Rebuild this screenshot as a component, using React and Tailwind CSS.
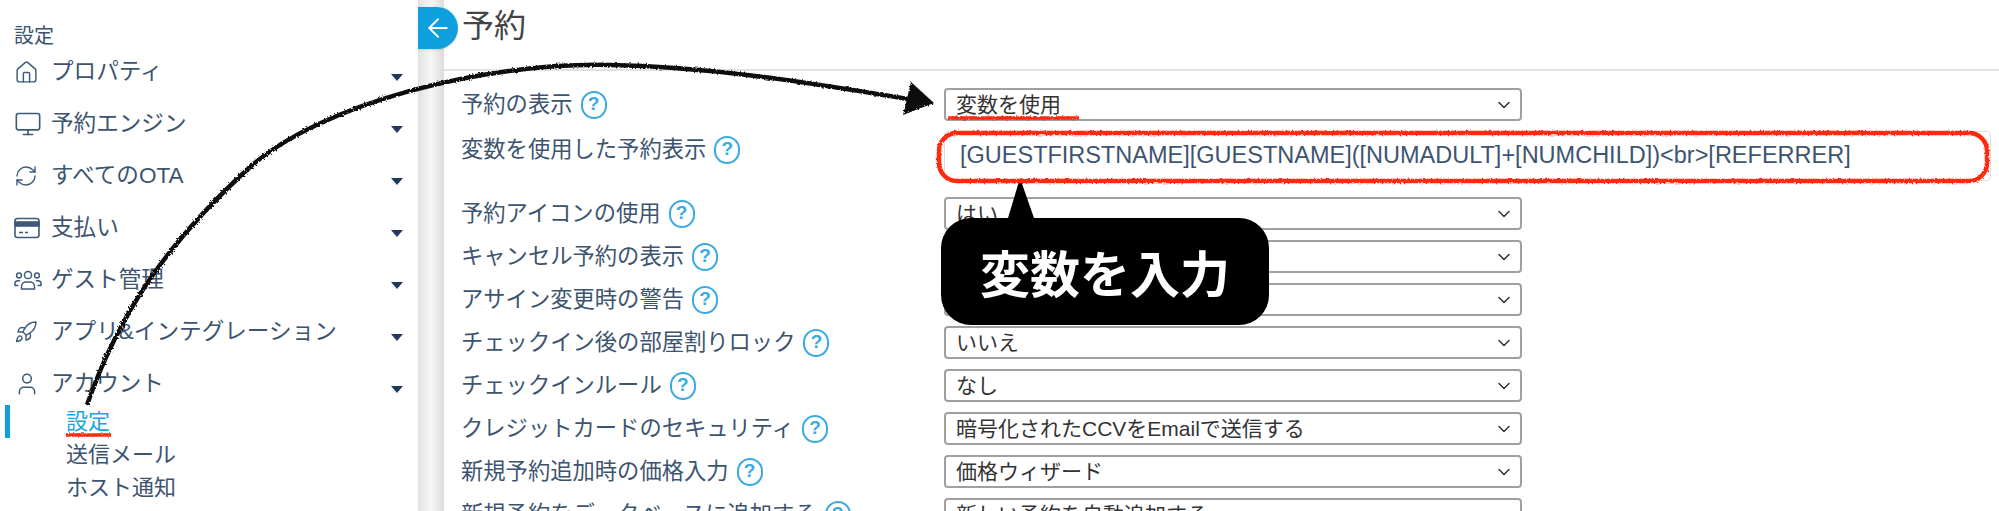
import React from 'react';
import { House, Monitor, RefreshCw, Rocket, User, ChevronDown, ArrowLeft } from 'lucide-react';

const CardIcon = () => (
  <svg width="26" height="22" viewBox="0 0 26 22" fill="none" stroke="#3d5a7a" strokeWidth="1.6">
    <rect x="1" y="1.5" width="24" height="19" rx="2.5" />
    <rect x="1" y="5" width="24" height="4" fill="#3d5a7a" />
    <path d="M5 15.5h4M11 15.5h3" />
  </svg>
);

const GuestsIcon = () => (
  <svg width="28" height="22" viewBox="0 0 28 22" fill="none" stroke="#3d5a7a" strokeWidth="1.5">
    <circle cx="14" cy="6" r="3.6" />
    <path d="M7.5 20v-2.5c0-2.6 2-4.5 4.5-4.5h4c2.5 0 4.5 1.9 4.5 4.5V20z" />
    <circle cx="5" cy="6.5" r="2.4" />
    <circle cx="23" cy="6.5" r="2.4" />
    <path d="M4.5 16.5H1v-2c0-1.6 1.2-2.8 2.8-2.8h2.4M23.5 16.5H27v-2c0-1.6-1.2-2.8-2.8-2.8h-2.4" />
  </svg>
);

const menu = [
  { label: 'プロパティ', icon: <House size={25} strokeWidth={1.4} /> },
  { label: '予約エンジン', icon: <Monitor size={28} strokeWidth={1.4} /> },
  { label: 'すべてのOTA', icon: <RefreshCw size={24} strokeWidth={1.4} /> },
  { label: '支払い', icon: <CardIcon /> },
  { label: 'ゲスト管理', icon: <GuestsIcon /> },
  { label: 'アプリ&インテグレーション', icon: <Rocket size={24} strokeWidth={1.4} /> },
  { label: 'アカウント', icon: <User size={26} strokeWidth={1.4} /> },
];

const rows = [
  { label: '予約の表示', value: '変数を使用' },
  { label: '変数を使用した予約表示', text: '[GUESTFIRSTNAME][GUESTNAME]([NUMADULT]+[NUMCHILD])<br>[REFERRER]' },
  { label: '予約アイコンの使用', value: 'はい' },
  { label: 'キャンセル予約の表示', value: '' },
  { label: 'アサイン変更時の警告', value: '' },
  { label: 'チェックイン後の部屋割りロック', value: 'いいえ' },
  { label: 'チェックインルール', value: 'なし' },
  { label: 'クレジットカードのセキュリティ', value: '暗号化されたCCVをEmailで送信する' },
  { label: '新規予約追加時の価格入力', value: '価格ウィザード' },
  { label: '新規予約をデータベースに追加する', value: '新しい予約を自動追加する' },
];

const Help = () => (
  <span className="ml-[8px] inline-flex h-[28px] w-[26px] shrink-0 items-center justify-center rounded-full border-2 border-[#3aaae2] text-[19px] font-bold text-[#3aaae2]">
    ?
  </span>
);

const Select = ({ value }) => (
  <div className="flex h-[33px] w-[578px] items-center justify-between rounded-[4px] border-2 border-[#a0a0a0] bg-white pl-[10px] pr-[6px] text-[21px] text-[#333]">
    <span>{value}</span>
    <ChevronDown size={20} strokeWidth={1.8} className="text-[#333]" />
  </div>
);

const Row = ({ row }) => {
  if (row.text) {
    return (
      <div className="mb-[16px] flex h-[50px] items-start">
        <div className="flex w-[483px] items-center pt-[2px] text-[22.3px]">
          {row.label}
          <Help />
        </div>
        <div className="flex h-[50px] w-[1047px] items-center rounded-[4px] border border-[#ddd] pl-[15px] text-[23.5px] text-[#3d5470]">
          {row.text}
        </div>
      </div>
    );
  }
  return (
    <div className="mb-[10px] flex h-[33px] items-center">
      <div className="flex w-[483px] items-center text-[22.3px]">
        {row.label}
        <Help />
      </div>
      <Select value={row.value} />
    </div>
  );
};

export default function App() {
  return (
    <div className="relative flex h-[511px] w-[1999px] overflow-hidden bg-white font-['Liberation_Sans','Noto_Sans_CJK_JP',sans-serif] text-[#3d5470]">
      <aside className="w-[418px] shrink-0 pt-[22px]">
        <div className="h-[24px] pl-[14px] text-[20px] leading-[28px]">設定</div>
        <div className="-mb-[5px]">
          {menu.map((item) => (
            <div key={item.label} className="flex h-[52px] items-center pl-[14px] pr-[15px] text-[22.6px]">
              <span className="flex w-[38px] items-center text-[#3d5a7a]">{item.icon}</span>
              <span className="-ml-[1px] flex-1">{item.label}</span>
              <span className="mt-[10px] h-0 w-0 border-x-[6.5px] border-t-[7px] border-x-transparent border-t-[#1e3a5f]" />
            </div>
          ))}
        </div>
        <div className="flex h-[33px] items-center">
          <span className="ml-[5px] mr-[56px] h-[33px] w-[5px] bg-[#0ea0dc]" />
          <span className="text-[22px] text-[#1ba5e0]">設定</span>
        </div>
        <div className="flex h-[33px] items-center pl-[66px] text-[22px]">送信メール</div>
        <div className="flex h-[33px] items-center pl-[66px] text-[22px]">ホスト通知</div>
      </aside>

      <div className="w-[26px] shrink-0 bg-gradient-to-r from-[#e2e2e2] via-[#f6f6f6] to-[#dcdcdc]" />

      <main className="flex-1">
        <div className="flex h-[71px] items-start border-b-2 border-[#e2e2e2] pl-[18px] pt-[3px]">
          <h1 className="text-[32px] leading-[46px] text-[#444]">予約</h1>
        </div>
        <div className="pl-[17px] pt-[17px]">
          {rows.map((row) => (
            <Row key={row.label} row={row} />
          ))}
        </div>
      </main>

      {/* back button on top of the gutter */}
      <div className="absolute left-[418px] top-[7px] flex h-[42px] w-[40px] items-center justify-center rounded-r-full bg-[#0ea0dc] text-white shadow">
        <ArrowLeft size={30} strokeWidth={1.5} />
      </div>

      {/* callout */}
      <div className="absolute left-[941px] top-[218px] flex h-[107px] w-[328px] items-center justify-center rounded-[30px] bg-black text-[50px] font-bold text-white font-['Noto_Sans_CJK_JP',sans-serif]">
        変数を入力
      </div>

      {/* hand drawn annotations */}
      <svg className="pointer-events-none absolute left-0 top-0" width="1999" height="511" fill="none">
        <defs>
          <filter id="rough" x="-5%" y="-5%" width="110%" height="110%">
            <feTurbulence type="fractalNoise" baseFrequency="0.5" numOctaves="2" seed="3" />
            <feDisplacementMap in="SourceGraphic" scale="3" />
          </filter>
        </defs>
        <polygon points="1008,218 1034,218 1020,178" fill="#000" />
        <g filter="url(#rough)">
          <path d="M87 405C120 310 170 240 250 167C320 105 480 62 610 65C720 67 820 85 915 100" stroke="#111" strokeWidth="4.5" />
          <polygon points="934,103 911,82 903,115" fill="#111" />
          <path d="M66 435H111M948 118H1079" stroke="#ff2a0a" strokeWidth="3.5" />
          <rect x="939" y="133" width="1048" height="48" rx="18" stroke="#ff2a0a" strokeWidth="4.5" />
        </g>
      </svg>
    </div>
  );
}
